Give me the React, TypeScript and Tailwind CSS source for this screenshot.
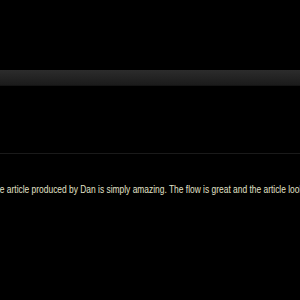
export default function App() {
  return (
    <div className="h-[300px] w-[300px] overflow-hidden bg-black font-['Liberation_Sans',Arial,sans-serif]">
      <div className="h-[70px]" />
      <div className="h-4 border-b border-[#141414] bg-gradient-to-b from-[#2c2c2c] to-[#1b1b1b]" />
      <div className="h-[67px]" />
      <div className="h-px bg-[#1a1a1a]" />
      <div className="pt-[28px]">
        <p className="ml-[-10px] origin-left scale-x-[0.765] whitespace-nowrap text-[11px] leading-[14px] text-[#e2e2c8]">
          The article produced by Dan is simply amazing. The flow is great and the article looks professional.
        </p>
      </div>
    </div>
  );
}
